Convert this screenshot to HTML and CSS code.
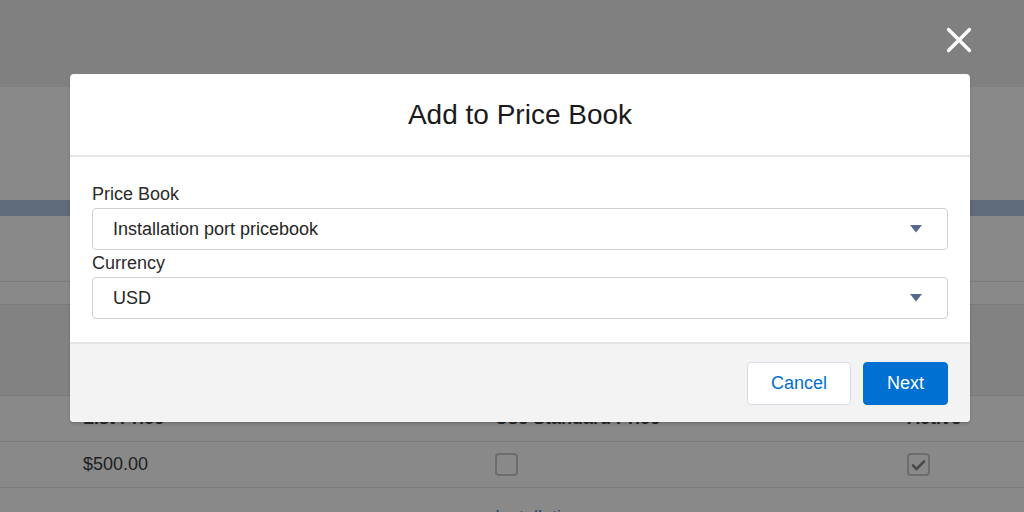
FILE: index.html
```html
<!DOCTYPE html>
<html lang="en">
    <head>
        <meta name="viewport" content="width=device-width, initial-scale=1">
        <link rel="stylesheet" href="styles.css">
        <title>Add to Price Book</title>
    </head>
    <body>
        <div class="page">
            <div class="page-top"></div>
            <div class="page-head"></div>
            <div class="band"></div>
            <div class="row row-tall"></div>
            <div class="row row-short"></div>
            <div class="row section"></div>
            <div class="row grid head">
                <span>List Price</span>
                <span>Use Standard Price</span>
                <span>Active</span>
            </div>
            <div class="row grid data">
                <span>$500.00</span>
                <span><i class="checkbox"></i></span>
                <span>
                    <i class="checkbox checked">
                        <svg width="15" height="12" viewBox="0 0 15 12"><path d="M2 6.5l3.5 3.5L13 2.5" fill="none" stroke="#4b4b4b" stroke-width="2.6" stroke-linecap="round" stroke-linejoin="round"/></svg>
                    </i>
                </span>
            </div>
            <div class="row grid last">
                <span></span>
                <span class="link">Installation</span>
                <span></span>
            </div>
        </div>

        <svg class="close" width="26" height="26" viewBox="0 0 26 26">
            <path d="M2.5 2.5l21 21M23.5 2.5l-21 21" stroke="#fff" stroke-width="3.4" stroke-linecap="round"/>
        </svg>

        <div class="modal">
            <div class="modal-header">
                <h2>Add to Price Book</h2>
            </div>
            <div class="modal-body">
                <label>Price Book</label>
                <div class="select">
                    <span>Installation port pricebook</span>
                    <svg width="12" height="8" viewBox="0 0 12 8"><path d="M0 0h12L6 7.5z" fill="#54698d"/></svg>
                </div>
                <label>Currency</label>
                <div class="select">
                    <span>USD</span>
                    <svg width="12" height="8" viewBox="0 0 12 8"><path d="M0 0h12L6 7.5z" fill="#54698d"/></svg>
                </div>
            </div>
            <div class="modal-footer">
                <button class="btn btn-neutral">Cancel</button>
                <button class="btn btn-brand">Next</button>
            </div>
        </div>
    </body>
</html>
```

FILE: styles.css
```css
body {
    margin: 0;
    font-family: "Liberation Sans", Arial, sans-serif;
    font-size: 18px;
    color: #2b2b2b;
    background: #898989;
    overflow: hidden;
}

.page {
    width: 1024px;
    height: 512px;
    overflow: hidden;
}

.page-top {
    height: 87px;
    background: #808080;
}

.page-head {
    height: 113px;
    background: #898989;
}

.band {
    height: 16px;
    background: #5f6a7a;
}

.row {
    background: #898989;
    border-bottom: 1px solid #7b7b7b;
}

.row-tall {
    height: 65px;
}

.row-short {
    height: 22px;
}

.section {
    height: 90px;
    background: #828282;
}

.grid {
    display: grid;
    grid-template-columns: 412px 412px 1fr;
    padding-left: 83px;
    align-items: center;
}

.head {
    height: 45px;
    font-weight: bold;
    color: #262626;
}

.data {
    height: 45px;
    color: #1e1e1e;
}

.last {
    align-items: start;
    padding-top: 18px;
    height: 40px;
    line-height: 22px;
    border-bottom: 0;
}

.link {
    color: #2a4a6a;
}

.checkbox {
    display: flex;
    align-items: center;
    justify-content: center;
    box-sizing: border-box;
    width: 23px;
    height: 23px;
    border: 2px solid #6d6d6d;
    border-radius: 4px;
}

.close {
    position: absolute;
    top: 27px;
    left: 946px;
}

.modal {
    position: absolute;
    top: 74px;
    left: 70px;
    width: 900px;
    background: #fff;
    border-radius: 4px;
    box-shadow: 0 2px 3px rgba(0, 0, 0, 0.18);
}

.modal-header {
    height: 81px;
    display: flex;
    align-items: center;
    justify-content: center;
    border-bottom: 2px solid #e6e6e6;
}

.modal-header h2 {
    margin: 0;
    font-size: 28px;
    font-weight: normal;
    color: #1a1a1a;
}

.modal-body {
    padding: 24px 22px 23px 22px;
}

.modal-body label {
    display: block;
    height: 27px;
    line-height: 27px;
    color: #2b2b2b;
}

.select {
    display: flex;
    align-items: center;
    justify-content: space-between;
    box-sizing: border-box;
    height: 42px;
    padding: 0 25px 0 20px;
    border: 1px solid #cfcfcf;
    border-radius: 4px;
    color: #262626;
}

.modal-footer {
    display: flex;
    justify-content: flex-end;
    gap: 12px;
    padding: 18px 22px 17px;
    background: #f3f3f3;
    border-top: 2px solid #e6e6e6;
    border-radius: 0 0 4px 4px;
}

.btn {
    box-sizing: border-box;
    height: 43px;
    padding: 0 23px;
    font-family: inherit;
    font-size: 18px;
    border-radius: 4px;
    cursor: pointer;
}

.btn-neutral {
    background: #fff;
    border: 1px solid #d8dde6;
    color: #0070d2;
}

.btn-brand {
    background: #0070d2;
    border: 1px solid #0070d2;
    color: #fff;
}
```
